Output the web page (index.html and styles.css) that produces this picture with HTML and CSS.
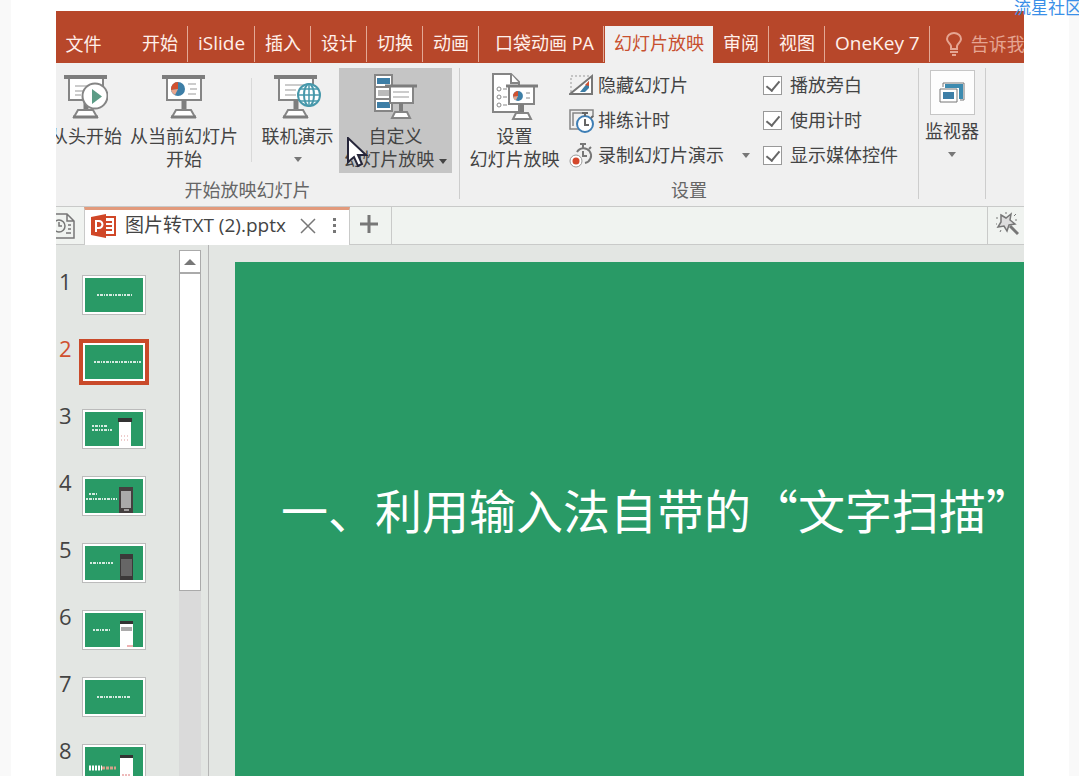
FILE: index.html
```html
<!DOCTYPE html>
<html lang="zh-CN">
<head>
<meta charset="utf-8">
<title>图片转TXT (2).pptx</title>
<link rel="stylesheet" href="styles.css">
</head>
<body>
<svg class="defs" aria-hidden="true">
  <defs>
    <g id="board">
      <path d="M5 5V26H39V5" fill="#fff" stroke="#858585" stroke-width="2"/>
      <path d="M0 3H43" stroke="#7d7d7d" stroke-width="4"/>
      <path d="M22 26V37" stroke="#7d7d7d" stroke-width="5"/>
      <path d="M14 36H29L33 43H10Z" fill="#fff" stroke="#858585" stroke-width="2"/>
      <path d="M9 43H34" stroke="#7d7d7d" stroke-width="3"/>
    </g>
    <g id="pie">
      <circle r="7" fill="#3d7ea6"/>
      <path d="M0 0V-7A7 7 0 0 0 -7 1Z" fill="#d2512f"/>
      <path d="M0 0L-7 1A7 7 0 0 0 -3 6Z" fill="#e9a58c"/>
    </g>
  </defs>
</svg>
<main class="page">
  <div class="app">
    <header class="tabs">
      <button class="tab file">文件</button>
      <button class="tab">开始</button>
      <button class="tab latin">iSlide</button>
      <button class="tab">插入</button>
      <button class="tab">设计</button>
      <button class="tab">切换</button>
      <button class="tab">动画</button>
      <button class="tab pocket">口袋动画 PA</button>
      <button class="tab active">幻灯片放映</button>
      <button class="tab">审阅</button>
      <button class="tab">视图</button>
      <button class="tab latin">OneKey 7</button>
      <button class="tab tell">
        <svg width="16" height="24" viewBox="0 0 16 24" fill="none" stroke="currentColor" stroke-width="2"><path d="M5 17V14C4 11 1 10 1 7A7 6 0 0 1 15 7C15 10 12 11 11 14V17Z"/><path d="M4 20H12M6 23H10"/></svg>
        告诉我
      </button>
    </header>

    <section class="ribbon">
      <div class="group start">
        <div class="tools">
          <button class="big from-start">
            <svg width="44" height="46" viewBox="0 0 44 46"><use href="#board"/><path d="M11 12H24M11 17H19M11 21H17" stroke="#999"/><circle cx="31" cy="22" r="12.500" fill="#fff" stroke="#858585" stroke-width="2"/><path d="M28 15V30L38 22.500Z" fill="#5c9c86"/></svg>
            <span>从头开始</span>
          </button>
          <button class="big current">
            <svg width="44" height="46" viewBox="0 0 44 46"><use href="#board"/><use href="#pie" x="16" y="15"/><path d="M26 10H34M28 15H35M26 20H34" stroke="#999"/></svg>
            <span>从当前幻灯片<br>开始</span>
          </button>
          <div class="rule"></div>
          <button class="big online">
            <svg width="48" height="46" viewBox="0 0 48 46"><use href="#board"/><path d="M11 11H30M11 16H22M11 21H22" stroke="#999"/><g fill="#fff" stroke="#4798ab" stroke-width="2"><circle cx="35" cy="21" r="11"/><ellipse cx="35" cy="21" rx="5" ry="11"/><path d="M24 21H46M26 15H44M26 27H44M35 10V32" fill="none" stroke-width="1.500"/></g></svg>
            <span>联机演示</span>
            <i class="arrow"></i>
          </button>
          <button class="big custom">
            <svg width="44" height="46" viewBox="0 0 44 46"><path d="M1 1H18V37H1ZM1 13H18M1 25H18" fill="#fff" stroke="#858585" stroke-width="2"/><path d="M3 4H16V10H3ZM3 28H16V34H3Z" fill="#3d7ea6"/><path d="M4 16H15V22H4Z" fill="#bbb"/><path d="M16 13V29H39V13" fill="#fff" stroke="#858585" stroke-width="2"/><path d="M11 12H43" stroke="#7d7d7d" stroke-width="3"/><path d="M19 18H35M19 23H35" stroke="#999"/><path d="M27 29V40" stroke="#7d7d7d" stroke-width="4"/><path d="M21 38H33L36 44H18Z" fill="#fff" stroke="#858585" stroke-width="2"/></svg>
            <span>自定义<br>幻灯片放映 <i class="arrow dark"></i></span>
            <svg class="cursor" width="22" height="32" viewBox="0 0 22 32"><path d="M1 1V25L7 20L11 29L15 27L11 18H19Z" fill="#fff" stroke="#26263a" stroke-width="2"/></svg>
          </button>
        </div>
        <div class="caption">开始放映幻灯片</div>
      </div>

      <div class="group setup">
        <div class="tools">
          <button class="big set">
            <svg width="46" height="48" viewBox="0 0 46 48"><path d="M1 1H19L27 9V39H1Z" fill="#fff" stroke="#858585" stroke-width="2"/><path d="M19 1V10H27" fill="#fff" stroke="#858585" stroke-width="2"/><g fill="none" stroke="#888"><circle cx="7" cy="16" r="2"/><circle cx="7" cy="24" r="2"/><circle cx="7" cy="32" r="2"/><path d="M11 16H15M11 24H15M11 32H15"/></g><path d="M17 14V31H42V14" fill="#fff" stroke="#858585" stroke-width="2"/><path d="M14 13H46" stroke="#7d7d7d" stroke-width="3"/><use href="#pie" transform="translate(26 23) scale(.7)"/><path d="M34 20H38M34 25H38" stroke="#888"/><path d="M30 31V41" stroke="#7d7d7d" stroke-width="4"/><path d="M24 40H36L39 46H21Z" fill="#fff" stroke="#858585" stroke-width="2"/></svg>
            <span>设置<br>幻灯片放映</span>
          </button>
          <div class="list">
            <button class="row"><svg width="26" height="26" viewBox="0 0 26 26"><path d="M2 19V3H20" fill="none" stroke="#999" stroke-dasharray="2 2"/><path d="M1 21H23V3Z" fill="#fff" stroke="#777" stroke-width="2"/><path d="M11 19L20 8V15L16 19Z" fill="#3d7ea6"/><path d="M16 12L20 8V13Z" fill="#d2512f"/></svg>隐藏幻灯片</button>
            <button class="row"><svg width="26" height="26" viewBox="0 0 26 26"><path d="M24 9V2H1V21H10M4 18V5H13" fill="none" stroke="#858585" stroke-width="1.500"/><circle cx="16" cy="16" r="8" fill="#fff" stroke="#3e7eb5" stroke-width="2"/><path d="M16 11V17H20" fill="none" stroke="#666" stroke-width="2"/><path d="M16 8V5M13 5H19M22 10L24 8" stroke="#666" stroke-width="2"/></svg>排练计时</button>
            <button class="row"><svg width="26" height="26" viewBox="0 0 26 26"><path d="M8 9A7.500 7.500 0 1 1 16 20" fill="none" stroke="#777" stroke-width="2"/><path d="M14 8V13H18M14 5V1M11 1H17M20 6L22 4" fill="none" stroke="#777" stroke-width="2"/><circle cx="7" cy="18" r="6" fill="#fff" stroke="#999" stroke-width="1"/><circle cx="7" cy="18" r="3.500" fill="#d4472b"/></svg>录制幻灯片演示<i class="arrow"></i></button>
          </div>
          <div class="checks">
            <label class="check"><input type="checkbox" checked>播放旁白</label>
            <label class="check"><input type="checkbox" checked>使用计时</label>
            <label class="check"><input type="checkbox" checked>显示媒体控件</label>
          </div>
        </div>
        <div class="caption">设置</div>
      </div>

      <div class="group monitor">
        <button class="big">
          <span class="frame"><svg width="26" height="22" viewBox="0 0 26 22"><path d="M4 5V1H25V18H21" fill="#fff" stroke="#777" stroke-width="1"/><path d="M6 4H22V17" fill="none" stroke="#3d8bb0" stroke-width="4"/><path d="M1 7H18V20H1Z" fill="#fff" stroke="#777"/><path d="M4 10H15V17H4Z" fill="#3d7ea6"/></svg></span>
          <span>监视器</span>
          <i class="arrow"></i>
        </button>
      </div>
    </section>

    <nav class="docs">
      <button class="recent" aria-label="最近"><svg width="20" height="26" viewBox="0 0 20 26" fill="none" stroke="#777" stroke-width="1.500"><path d="M0 1H11L18 8V25H0M11 1V8H18"/><circle cx="3" cy="13" r="6"/><path d="M3 9V13H6M12 12H15M12 16H15M10 20H15"/></svg></button>
      <div class="doc">
        <svg width="26" height="24" viewBox="0 0 26 24"><path d="M14 3H24V21H14" fill="#fff" stroke="#d04727" stroke-width="2"/><path d="M15 8H21M15 12H21M15 16H21" stroke="#d04727" stroke-width="2"/><path d="M0 3L15 0V24L0 21Z" fill="#d04727"/><path d="M5 18V7H8A3 3 0 0 1 8 14H5" fill="none" stroke="#fff" stroke-width="2"/></svg>
        <span class="name">图片转TXT (2).pptx</span>
        <button class="close" aria-label="关闭"><svg width="16" height="16" viewBox="0 0 16 16"><path d="M1 1L15 15M15 1L1 15" stroke="#777" stroke-width="1.500"/></svg></button>
        <button class="more" aria-label="更多"><svg width="4" height="16" viewBox="0 0 4 16" fill="#777"><path d="M0 0H3V3H0ZM0 6H3V9H0ZM0 12H3V15H0Z"/></svg></button>
      </div>
      <button class="add" aria-label="新建"><svg width="20" height="20" viewBox="0 0 20 20"><path d="M10 1V19M1 10H19" stroke="#777" stroke-width="3"/></svg></button>
      <button class="wand" aria-label="工具"><svg width="24" height="24" viewBox="0 0 24 24"><path d="M15 14L23 22" stroke="#777" stroke-width="3"/><path d="M6 3L11 6L16 2L15 8L20 12L14 13L12 19L9 14L3 15L6 10Z" fill="#ddd" stroke="#777" stroke-width="1.500"/><path d="M11 0V2M1 6H3M19 4L21 2M1 12H2M5 20L6 18M20 8H22" stroke="#777"/></svg></button>
    </nav>

    <div class="work">
      <ol class="thumbs">
        <li><span>1</span><svg viewBox="0 0 58 34"><path class="ink" d="M12 17H47"/></svg></li>
        <li class="on"><span>2</span><svg viewBox="0 0 58 34"><path class="ink" d="M9 17H56"/></svg></li>
        <li><span>3</span><svg viewBox="0 0 58 34"><path class="ink" d="M7 14H22M7 18H28"/><path d="M34 9H46V34H34Z" fill="#fff"/><path d="M33 6H47V10H33Z" fill="#333"/><path d="M36 24H45M36 28H45" stroke="#d99" stroke-dasharray="1 2"/></svg></li>
        <li><span>4</span><svg viewBox="0 0 58 34"><path class="ink" d="M4 15H12M1 20H32"/><path d="M34 8H48V34H34Z" fill="#443f3f"/><path d="M36 12H46V29H36Z" fill="#aaa"/><path d="M39 31H44" stroke="#fff"/></svg></li>
        <li><span>5</span><svg viewBox="0 0 58 34"><path class="ink" d="M5 17H28"/><path d="M35 8H48V34H35Z" fill="#3b3939"/><path d="M36 13H47V30H36Z" fill="#666"/></svg></li>
        <li><span>6</span><svg viewBox="0 0 58 34"><path class="ink" d="M8 17H25"/><path d="M35 8H48V34H35Z" fill="#fff"/><path d="M35 8H48V11H35Z" fill="#333"/><path d="M36 14H47V18H36Z" fill="#aaa"/><path d="M42 33H48" stroke="#d66"/></svg></li>
        <li><span>7</span><svg viewBox="0 0 58 34"><path class="ink" d="M12 17H46"/></svg></li>
        <li><span>8</span><svg viewBox="0 0 58 34"><path d="M4 21H17" stroke="#fff" stroke-width="5" stroke-dasharray="2 1"/><path d="M17 21H31" stroke="#d5a18a" stroke-width="3" stroke-dasharray="3 1"/><path d="M35 9H48V34H35Z" fill="#fff"/><path d="M35 8H48V11H35Z" fill="#333"/><path d="M37 28H46" stroke="#d77" stroke-dasharray="2 1"/></svg></li>
      </ol>
      <div class="scroll">
        <button class="up" aria-label="向上滚动"></button>
        <div class="grip"></div>
      </div>
      <div class="stage">
        <article class="slide"><h1>一、利用输入法自带的“文字扫描”</h1></article>
      </div>
    </div>
  </div>
</main>
<div class="mark">流星社区</div>
</body>
</html>
```
FILE: styles.css
```css
* { box-sizing: border-box; }
body {
  margin: 0;
  height: 100vh;
  overflow: hidden;
  position: relative;
  background: #f9f9f9;
  color: #444;
  font: 18px/23px "Open Sans", "Noto Sans CJK SC", sans-serif;
}
button {
  margin: 0;
  padding: 0;
  border: 0;
  background: none;
  color: inherit;
  font: inherit;
  white-space: nowrap;
}
svg { display: block; flex: none; }
.defs { position: absolute; width: 0; height: 0; }
.page {
  height: 100%;
  margin: 0 10px 0 11px;
  padding: 11px 45px 0;
  background: #fff;
}
.app {
  height: 100%;
  display: flex;
  flex-direction: column;
  overflow: hidden;
  background: #f0f0f0;
}

.tabs {
  flex: none;
  display: flex;
  align-items: flex-end;
  height: 52px;
  background: #b7472a;
  color: #fff0ea;
}
.tab {
  flex: none;
  height: 36px;
  margin-bottom: 1px;
  padding: 0 9px 2px 10px;
  border-right: 1px solid #e3a996;
}
.tab.file { width: 76px; padding: 0 30px 0 9px; border: 0; }
.tab.latin { font-size: 19px; }
.tab.pocket { padding-left: 16px; }
.tab.active {
  height: 37px;
  margin: 0 0 0 1px;
  padding-left: 9px;
  border: 0;
  background: #f0f0f0;
  color: #c8502f;
}
.tab.tell {
  display: flex;
  align-items: center;
  gap: 9px;
  padding: 0 0 0 16px;
  border: 0;
  color: #e5a592;
}

.ribbon {
  flex: none;
  display: flex;
  height: 144px;
  padding: 5px 0 7px;
  border-bottom: 1px solid #c9cac9;
}
.group {
  flex: none;
  display: flex;
  flex-direction: column;
  justify-content: space-between;
  border-right: 1px solid #cdcdcd;
}
.start { width: 404px; }
.setup { width: 459px; }
.monitor { width: 67px; }
.tools { display: flex; }
.caption { color: #666; text-align: center; line-height: 18px; }
.start .caption { padding-right: 20px; }
.big {
  flex: none;
  display: flex;
  flex-direction: column;
  align-items: center;
  gap: 5px;
  height: 105px;
  padding-top: 6px;
}
.from-start { width: 66px; align-items: flex-end; }
.from-start svg { margin-right: 14px; }
.current { width: 124px; }
.rule { width: 1px; height: 84px; margin: 10px 4px 0 5px; background: #d9d9d9; }
.online { width: 83px; }
.custom { position: relative; width: 113px; background: #c5c5c5; }
.set { width: 109px; padding-top: 5px; gap: 4px; }
.cursor { position: absolute; left: 8px; top: 69px; }
.arrow {
  display: inline-block;
  border: 4px solid transparent;
  border-top: 5px solid #777;
  border-bottom: 0;
  vertical-align: middle;
}
.big > .arrow { margin-top: 4px; }
.arrow.dark { border-top-color: #444; }
.list { width: 194px; }
.row {
  display: flex;
  align-items: center;
  gap: 3px;
  height: 35px;
}
.row .arrow { margin-left: 15px; }
.check {
  display: flex;
  align-items: center;
  gap: 8px;
  height: 35px;
}
.check input {
  appearance: none;
  width: 19px;
  height: 19px;
  margin: 0;
  border: 1px solid #999;
  background: #fff;
  display: grid;
  place-items: center;
}
.check input::after {
  content: "";
  width: 6px;
  height: 11px;
  margin-bottom: 3px;
  border: solid #666;
  border-width: 0 2px 2px 0;
  transform: rotate(40deg);
}
.monitor .big { width: 100%; padding-top: 2px; }
.frame {
  display: grid;
  place-items: center;
  width: 45px;
  height: 45px;
  border: 1px solid #c6c6c6;
  background: #fdfdfd;
}

.docs {
  flex: none;
  display: flex;
  height: 38px;
  border-bottom: 1px solid #c9cac9;
  background: #f0f3f0;
}
.recent { width: 28px; }
.doc {
  display: flex;
  align-items: center;
  height: 38px;
  padding: 0 0 4px 6px;
  border: 1px solid #c9cac9;
  border-top: 3px solid #e29a7c;
  border-bottom: 0;
  background: #fff;
}
.name { margin: 0 14px 0 8px; font-size: 19px; }
.more { margin: 0 12px 0 17px; }
.add { width: 42px; padding: 0 0 3px 9px; border-right: 1px solid #c9cac9; }
.wand { width: 37px; margin-left: auto; padding: 0 0 3px 7px; border-left: 1px solid #c9cac9; }

.work {
  flex: 1;
  min-height: 0;
  display: flex;
  background: #e3e6e3;
}
.thumbs {
  flex: none;
  display: flex;
  flex-direction: column;
  gap: 27px;
  width: 123px;
  margin: 0;
  padding: 30px 0 0 3px;
  list-style: none;
}
.thumbs li {
  flex: none;
  display: flex;
  gap: 9px;
  height: 40px;
  font-size: 22px;
  line-height: 12px;
}
.thumbs span { width: 14px; }
.thumbs svg {
  width: 64px;
  height: 40px;
  padding: 2px;
  border: 1px solid #bbb;
  background: linear-gradient(#299a66, #299a66) content-box, #fff;
}
.on span { color: #d0502f; }
.on svg { border-color: #fff; outline: 4px solid #c94a2a; outline-offset: -1px; }
.ink { stroke: #fff; stroke-width: 2; stroke-dasharray: 2 1 3 1 1 1; opacity: .8; }
.scroll {
  flex: none;
  width: 22px;
  margin-top: 5px;
  background: #dadada;
}
.up {
  display: grid;
  place-items: center;
  width: 22px;
  height: 23px;
  border: 1px solid #aaa;
  background: #fff;
}
.up::after {
  content: "";
  border: 6px solid transparent;
  border-bottom-color: #777;
  border-top: 0;
}
.grip { height: 318px; border: 1px solid #aaa; background: #fff; }
.stage {
  flex: 1;
  min-width: 0;
  margin-left: 7px;
  padding: 17px 0 0 26px;
  border-left: 1px solid #b5b5b5;
}
.slide {
  height: 100%;
  padding: 217px 0 0 46px;
  overflow: hidden;
  background: #299a66;
  color: #fff;
}
h1 {
  margin: 0;
  font: 400 47px/60px "Noto Sans CJK SC", sans-serif;
  white-space: nowrap;
}
.mark {
  position: absolute;
  left: 1014px;
  top: 0;
  color: #3a8fe8;
  font-size: 17px;
  line-height: 16px;
  white-space: nowrap;
}
```
